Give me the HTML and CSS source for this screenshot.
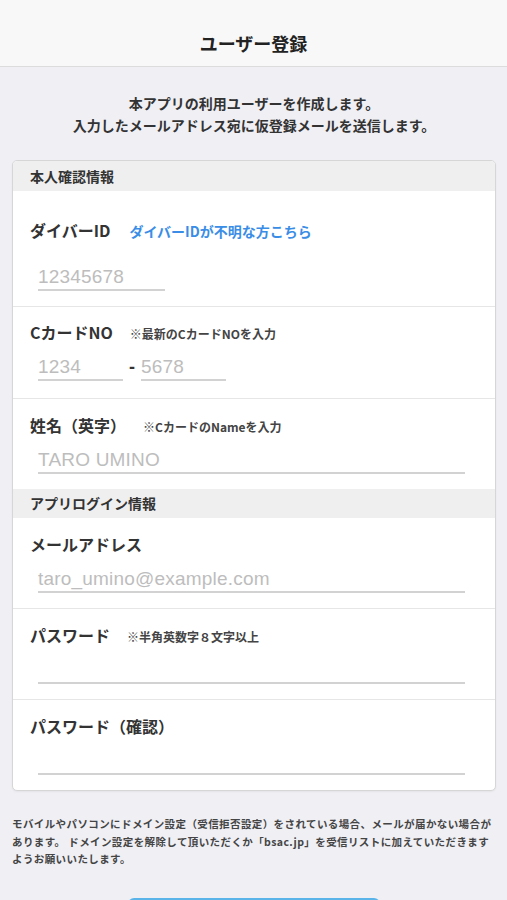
FILE: index.html
```html
<!DOCTYPE html>
<html lang="ja">

<head>
    <meta charset="UTF-8">
    <meta name="viewport" content="width=device-width, initial-scale=1.0">
    <title>ユーザー登録</title>
    <link rel="stylesheet" href="styles.css">
</head>

<body>
    <header class="nav-bar">
        <h1>ユーザー登録</h1>
    </header>

    <main class="content">
        <p class="intro">本アプリの利用ユーザーを作成します。<br>入力したメールアドレス宛に仮登録メールを送信します。</p>

        <div class="card">
            <div class="section-title">本人確認情報</div>

            <div class="row row-diver">
                <div class="label-line">
                    <span class="label">ダイバーID</span>
                    <a class="help-link" href="#">ダイバーIDが不明な方こちら</a>
                </div>
                <input class="field field-short" type="text" placeholder="12345678">
            </div>

            <div class="row row-card">
                <div class="label-line">
                    <span class="label">CカードNO</span>
                    <span class="note">※最新のCカードNOを入力</span>
                </div>
                <div class="split">
                    <input class="field field-card" type="text" placeholder="1234">
                    <span class="dash">-</span>
                    <input class="field field-card" type="text" placeholder="5678">
                </div>
            </div>

            <div class="row">
                <div class="label-line">
                    <span class="label">姓名（英字）</span>
                    <span class="note">※CカードのNameを入力</span>
                </div>
                <input class="field" type="text" placeholder="TARO UMINO">
            </div>

            <div class="section-title">アプリログイン情報</div>

            <div class="row">
                <div class="label-line">
                    <span class="label">メールアドレス</span>
                </div>
                <input class="field" type="email" placeholder="taro_umino@example.com">
            </div>

            <div class="row">
                <div class="label-line">
                    <span class="label">パスワード</span>
                    <span class="note">※半角英数字８文字以上</span>
                </div>
                <input class="field" type="password">
            </div>

            <div class="row">
                <div class="label-line">
                    <span class="label">パスワード（確認）</span>
                </div>
                <input class="field" type="password">
            </div>
        </div>

        <p class="notice">モバイルやパソコンにドメイン設定（受信拒否設定）をされている場合、メールが届かない場合が<br>あります。 ドメイン設定を解除して頂いただくか「bsac.jp」を受信リストに加えていただきます<br>ようお願いいたします。</p>

        <div class="button-wrap">
            <button class="submit" type="button"></button>
        </div>
    </main>
</body>

</html>
```

FILE: styles.css
```css
body {
    margin: 0;
    background-color: #efeff4;
    font-family: "Noto Sans CJK JP", "Liberation Sans", sans-serif;
    color: #333;
    overflow: hidden;
}

.nav-bar {
    padding-top: 20px;
    height: 46px;
    background-color: #f8f8f8;
    border-bottom: 1px solid #dcdcdc;
    display: flex;
    justify-content: center;
    align-items: center;
}

.nav-bar h1 {
    margin: 0;
    font-size: 18px;
    font-weight: bold;
    color: #222;
}

.content {
    padding: 0 11px 0 12px;
}

.intro {
    margin: 25px 0 24px;
    text-align: center;
    font-size: 14px;
    font-weight: bold;
    line-height: 22px;
}

.card {
    background-color: #fff;
    border: 1px solid #d6d6d6;
    border-radius: 5px;
    overflow: hidden;
    box-shadow: 0 1px 2px rgba(0, 0, 0, 0.05);
}

.section-title {
    height: 29px;
    padding-left: 17px;
    background-color: #efefef;
    font-size: 14px;
    font-weight: bold;
    line-height: 29px;
    color: #333;
}

.section-title:first-child {
    height: 30px;
    line-height: 30px;
}

.row {
    display: flex;
    flex-direction: column;
    padding: 15px 30px 15px 17px;
    gap: 11px;
}

.row + .row {
    border-top: 1px solid #e6e6e6;
}

.row-diver {
    padding-top: 28px;
    gap: 23px;
}

.row-card {
    padding-top: 14px;
    padding-bottom: 17px;
}

.label-line {
    display: flex;
    align-items: baseline;
    height: 22px;
    line-height: 22px;
}

.label {
    font-size: 16px;
    font-weight: bold;
    color: #333;
}

.help-link {
    margin-left: 19px;
    font-size: 14px;
    font-weight: bold;
    color: #3a8de6;
    text-decoration: none;
}

.note {
    margin-left: 17px;
    font-size: 12px;
    font-weight: bold;
    color: #444;
}

.field {
    box-sizing: border-box;
    margin: 0 0 0 8px;
    padding: 0;
    height: 27px;
    border: none;
    border-bottom: 2px solid #d2d2d2;
    outline: none;
    background: transparent;
    font-family: "Liberation Sans", Arial, sans-serif;
    font-size: 19px;
    letter-spacing: 0.2px;
    color: #333;
}

.field::placeholder {
    color: #bdbdbd;
}

.field-short {
    width: 127px;
}

.split {
    display: flex;
    align-items: center;
    margin-left: 8px;
}

.split .field {
    margin-left: 0;
}

.field-card {
    width: 85px;
}

.dash {
    width: 18px;
    text-align: center;
    font-family: "Liberation Sans", Arial, sans-serif;
    font-size: 18px;
    font-weight: bold;
    color: #333;
}

.notice {
    margin: 24px 0 0;
    font-size: 10.5px;
    font-weight: bold;
    letter-spacing: 0.4px;
    line-height: 17.5px;
    color: #444;
    white-space: nowrap;
}

.button-wrap {
    display: flex;
    justify-content: center;
    margin-top: 30px;
}

.submit {
    width: 252px;
    height: 44px;
    border: none;
    border-radius: 6px;
    background-color: #5ab4ea;
}
```
